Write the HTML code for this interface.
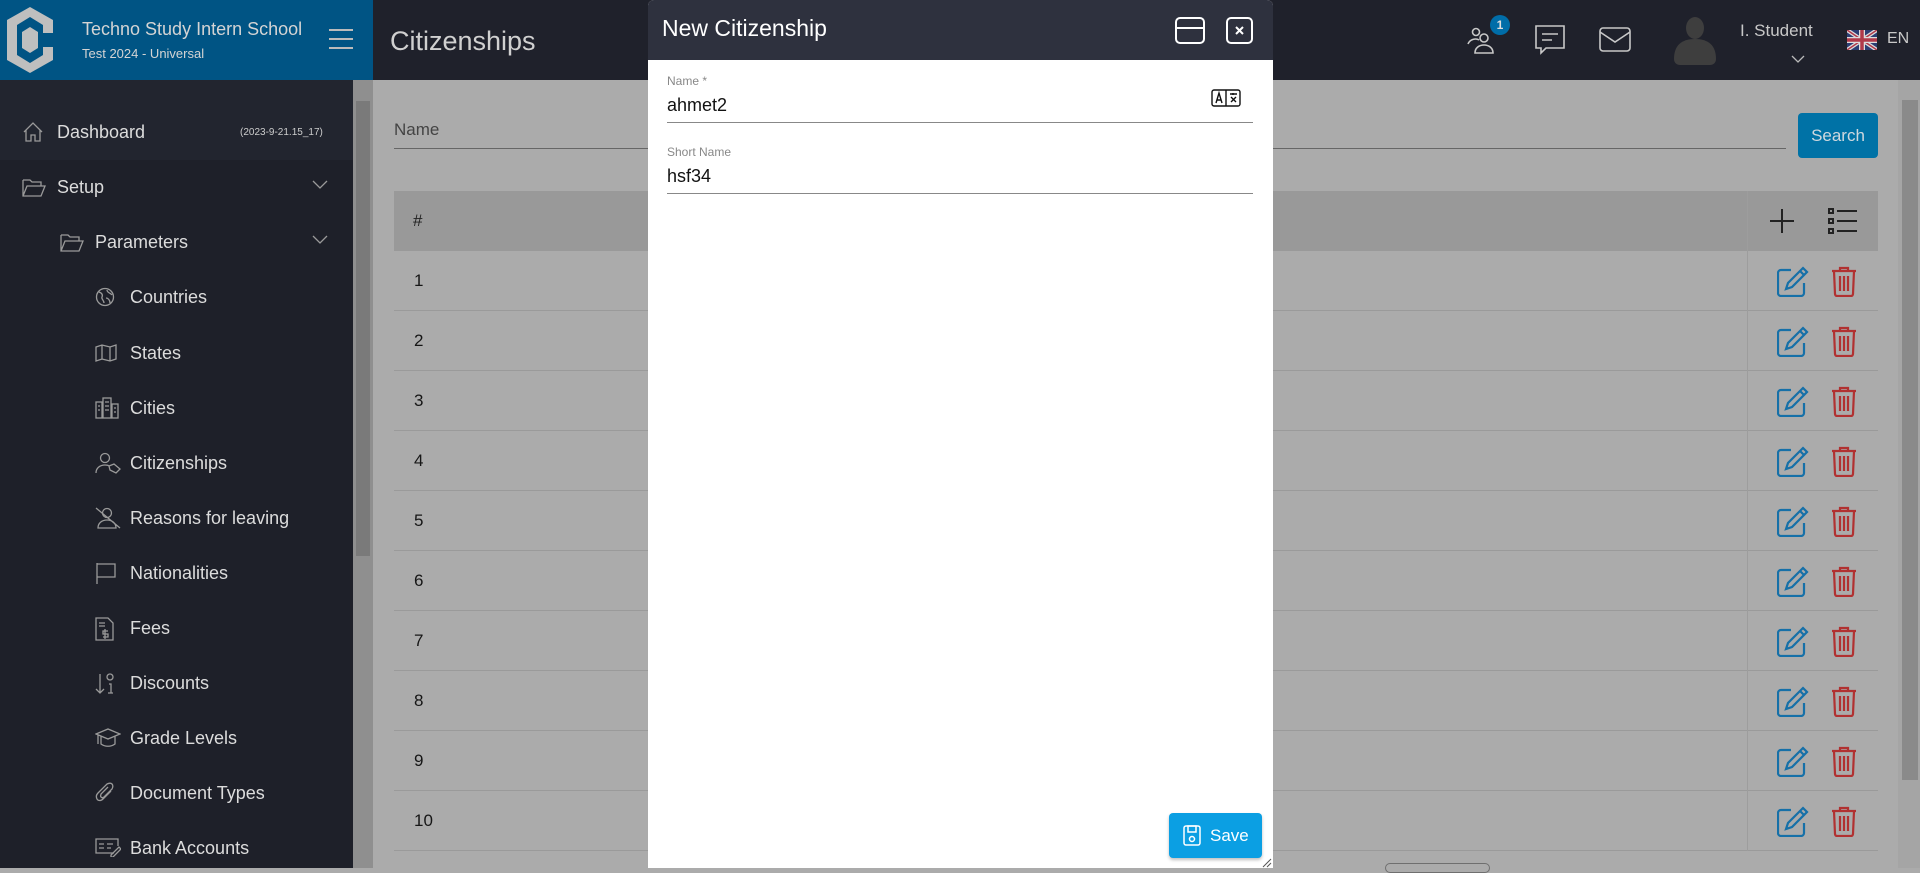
<!DOCTYPE html>
<html><head><meta charset="utf-8">
<style>
*{box-sizing:border-box;margin:0;padding:0}
body{width:1920px;height:868px;overflow:hidden;font-family:"Liberation Sans",sans-serif;background:#ababab;position:relative}
.abs{position:absolute}
#logo{left:0;top:0;width:373px;height:80px;background:#005484}
#hdr{left:373px;top:0;width:1547px;height:80px;background:#1f212b}
#side{left:0;top:80px;width:353px;height:788px;background:#1e2029}
#sscroll{left:353px;top:80px;width:20px;height:788px;background:#8f8f8f}
.si{position:absolute;color:#dcdcdc;font-size:18px;line-height:20px}
.ic{position:absolute;stroke:#9a9a9a;fill:none;stroke-width:1.3}
.row{position:absolute;left:394px;width:1484px;height:60px;border-bottom:1px solid #9a9a9a;background:#ababab}
.row span{position:absolute;left:20px;top:20px;font-size:17px;color:#161616}
.row .sep{position:absolute;left:1353px;top:0;width:1px;height:60px;background:#9d9d9d}
</style></head><body>
<div id="logo" class="abs">
<svg class="abs" style="left:5px;top:5px" width="50" height="70" viewBox="0 0 50 70"><polygon points="25,2 48,15 48,28 38,28 38,20 25,12 12,20 12,50 25,58 38,50 38,42 48,42 48,55 25,68 2,55 2,15" fill="#bfbfbf"/><polygon points="25,22 33,27 33,43 25,48 17,43 17,27" fill="#bfbfbf"/></svg>
<div class="abs" style="left:82px;top:19px;color:#d4d4d4;font-size:18px">Techno Study Intern School</div>
<div class="abs" style="left:82px;top:46px;color:#d4d4d4;font-size:13px">Test 2024 - Universal</div>
<div class="abs" style="left:329px;top:29px;width:24px;height:2px;background:#bbb"></div>
<div class="abs" style="left:329px;top:38px;width:24px;height:2px;background:#bbb"></div>
<div class="abs" style="left:329px;top:47px;width:24px;height:2px;background:#bbb"></div>
</div>
<div id="hdr" class="abs">
<div class="abs" style="left:17px;top:26px;color:#d0d0d0;font-size:27px">Citizenships</div>
<svg class="abs" style="left:1093px;top:22px" width="40" height="34" viewBox="0 0 40 34" fill="none" stroke="#c8c8c8" stroke-width="1.6"><circle cx="10" cy="10" r="3.5"/><circle cx="18" cy="16" r="4"/><path d="M2 22c2-5 8-6 11-4M9 31c0-5 4-8 9-8s9 3 9 8z"/></svg>
<div class="abs" style="left:1117px;top:15px;width:20px;height:20px;border-radius:50%;background:#006da8;color:#ddd;font-size:12px;text-align:center;line-height:20px;font-weight:bold">1</div>
<svg class="abs" style="left:1161px;top:24px" width="32" height="32" viewBox="0 0 32 32" fill="none" stroke="#c8c8c8" stroke-width="1.6"><path d="M2 2h28v22H12l-5 5v-5H2z"/><path d="M8 10h16M8 16h10"/></svg>
<svg class="abs" style="left:1226px;top:27px" width="32" height="25" viewBox="0 0 32 25" fill="none" stroke="#c8c8c8" stroke-width="1.6"><rect x="1" y="1" width="30" height="23" rx="3"/><path d="M1 5l15 10 15-10"/></svg>
<svg class="abs" style="left:1301px;top:15px" width="42" height="50" viewBox="0 0 42 50" fill="#3e3e3e"><ellipse cx="21" cy="13" rx="9" ry="11"/><path d="M0 44c0-14 8-20 21-20s21 6 21 20c0 4-3 6-6 6H6c-3 0-6-2-6-6z"/></svg>
<div class="abs" style="left:1367px;top:21px;color:#c8c8c8;font-size:17px">I. Student</div>
<svg class="abs" style="left:1418px;top:55px" width="14" height="8" viewBox="0 0 14 8" fill="none" stroke="#bbb" stroke-width="1.3"><path d="M1 1l6 6 6-6"/></svg>
<svg class="abs" style="left:1474px;top:30px" width="30" height="20" viewBox="0 0 60 40"><rect width="60" height="40" fill="#2b3d73"/><path d="M0 0L60 40M60 0L0 40" stroke="#ddd" stroke-width="8"/><path d="M0 0L60 40M60 0L0 40" stroke="#b0394a" stroke-width="3"/><path d="M30 0v40M0 20h60" stroke="#ddd" stroke-width="12"/><path d="M30 0v40M0 20h60" stroke="#b0394a" stroke-width="7"/></svg>
<div class="abs" style="left:1514px;top:30px;color:#c8c8c8;font-size:16px">EN</div>
</div>
<div class="abs" style="left:1898px;top:80px;width:22px;height:788px;background:#a5a5a5"></div>
<div class="abs" style="left:1902px;top:100px;width:16px;height:680px;background:#8a8a8a"></div>
<div id="side" class="abs">
<div class="abs" style="left:0;top:0;width:353px;height:80px;background:#22252f"></div>
</div>
<div id="sscroll" class="abs"><div class="abs" style="left:3px;top:21px;width:14px;height:455px;background:#7a7a7a"></div></div>
<svg class="ic" style="left:22px;top:121px" width="22" height="22" viewBox="0 0 22 22"><path d="M2 11L11 2l9 9M4 9v11h5v-6h4v6h5V9"/></svg>
<div class="si" style="left:57px;top:122px">Dashboard</div>
<div class="abs" style="left:240px;top:127px;color:#ccc;font-size:10px">(2023-9-21.15_17)</div>
<svg class="ic" style="left:22px;top:177px" width="24" height="20" viewBox="0 0 24 20"><path d="M1 3h7l2 2h9v4M1 3v16h18l4-10H5L1 19"/></svg>
<div class="si" style="left:57px;top:177px">Setup</div>
<svg class="ic" style="left:312px;top:180px" width="16" height="10" viewBox="0 0 16 10"><path d="M1 1l7 7 7-7"/></svg>
<svg class="ic" style="left:60px;top:232px" width="24" height="20" viewBox="0 0 24 20"><path d="M1 3h7l2 2h9v4M1 3v16h18l4-10H5L1 19"/></svg>
<div class="si" style="left:95px;top:232px">Parameters</div>
<svg class="ic" style="left:312px;top:235px" width="16" height="10" viewBox="0 0 16 10"><path d="M1 1l7 7 7-7"/></svg>
<svg class="ic" style="left:95px;top:287px" width="20" height="20" viewBox="0 0 20 20"><circle cx="10" cy="10" r="8.5"/><path d="M4 5c3 1 4 3 3 5s2 3 2 6M12 3c0 3 4 3 5 5M11 11c2 0 4 2 4 5"/></svg>
<div class="si" style="left:130px;top:287px">Countries</div>
<svg class="ic" style="left:95px;top:344px" width="22" height="18" viewBox="0 0 22 18"><path d="M1 3l6-2 8 2 6-2v14l-6 2-8-2-6 2zM7 1v14M15 3v14"/></svg>
<div class="si" style="left:130px;top:343px">States</div>
<svg class="ic" style="left:95px;top:397px" width="24" height="22" viewBox="0 0 24 22"><rect x="1" y="5" width="6" height="16"/><rect x="8" y="1" width="8" height="20"/><rect x="17" y="7" width="6" height="14"/><path d="M3 9h2M3 13h2M10 5h4M10 9h4M10 13h4M19 11h2M19 15h2"/></svg>
<div class="si" style="left:130px;top:398px">Cities</div>
<svg class="ic" style="left:95px;top:452px" width="26" height="22" viewBox="0 0 26 22"><circle cx="10" cy="6" r="4.5"/><path d="M1 21c0-5 4-8 9-8 2 0 3 0 4 1M14 14l5-2 6 5-4 4-6-3z"/></svg>
<div class="si" style="left:130px;top:453px">Citizenships</div>
<svg class="ic" style="left:95px;top:507px" width="26" height="22" viewBox="0 0 26 22"><circle cx="12" cy="6" r="4.5"/><path d="M3 21c0-5 4-8 9-8s9 3 9 8zM1 1l24 20"/></svg>
<div class="si" style="left:130px;top:508px">Reasons for leaving</div>
<svg class="ic" style="left:95px;top:562px" width="22" height="22" viewBox="0 0 22 22"><path d="M2 1v21M2 2h18v13H2"/></svg>
<div class="si" style="left:130px;top:563px">Nationalities</div>
<svg class="ic" style="left:95px;top:617px" width="20" height="24" viewBox="0 0 20 24"><path d="M1 1h12l5 5v17H1zM4 6h6M4 9h6M10 12v10M13 14H8v3h5v3H8"/></svg>
<div class="si" style="left:130px;top:618px">Fees</div>
<svg class="ic" style="left:95px;top:672px" width="20" height="24" viewBox="0 0 20 24"><path d="M5 2v19M1 17l4 4 4-4"/><circle cx="15" cy="5" r="3"/><path d="M14 12h2v9M13 21h5"/></svg>
<div class="si" style="left:130px;top:673px">Discounts</div>
<svg class="ic" style="left:95px;top:727px" width="26" height="22" viewBox="0 0 26 22"><path d="M1 7l12-5 12 5-12 5zM6 9v8c4 3 10 3 14 0V9M3 8v9"/></svg>
<div class="si" style="left:130px;top:728px">Grade Levels</div>
<svg class="ic" style="left:95px;top:782px" width="20" height="22" viewBox="0 0 20 22"><path d="M16 9l-8 8c-2 2-5 2-6 0s-1-4 1-6l9-9c2-1 4-1 5 0s1 3 0 5l-8 8c-1 1-2 1-3 0s0-2 0-3l7-7"/></svg>
<div class="si" style="left:130px;top:783px">Document Types</div>
<svg class="ic" style="left:95px;top:837px" width="26" height="20" viewBox="0 0 26 20"><path d="M19 16H1V2h22v7M4 7h5M4 11h5M12 7h6M12 11h4M16 18l8-8 2 2-8 8h-2z"/></svg>
<div class="si" style="left:130px;top:838px">Bank Accounts</div>

<!-- content -->
<div class="abs" style="left:394px;top:120px;color:#444;font-size:17px">Name</div>
<div class="abs" style="left:394px;top:148px;width:1392px;height:1px;background:#666"></div>
<div class="abs" style="left:1798px;top:113px;width:80px;height:45px;background:#0072a6;border-radius:4px;color:#cfd8de;font-size:17px;text-align:center;line-height:45px">Search</div>
<div class="abs" style="left:394px;top:191px;width:1484px;height:60px;background:#999"></div>
<div class="abs" style="left:1747px;top:191px;width:1px;height:660px;background:#9d9d9d"></div>
<div class="abs" style="left:413px;top:211px;color:#222;font-size:17px">#</div>
<svg class="abs" style="left:1769px;top:208px" width="26" height="26" viewBox="0 0 26 26" stroke="#222" stroke-width="2"><path d="M13 1v24M1 13h24"/></svg>
<svg class="abs" style="left:1828px;top:208px" width="30" height="26" viewBox="0 0 30 26" fill="none" stroke="#222" stroke-width="2"><rect x="1" y="1" width="4" height="4"/><rect x="1" y="11" width="4" height="4"/><rect x="1" y="21" width="4" height="4"/><path d="M9 3h20M9 13h20M9 23h20"/></svg>
<div id="rows"></div>
<script>
var h='';for(var i=0;i<10;i++){var t=251+i*60;h+='<div class="row" style="top:'+t+'px"><span>'+(i+1)+'</span><div class="sep"></div>'+
'<svg style="position:absolute;left:1383px;top:15px" width="32" height="31" viewBox="0 0 32 31" fill="none" stroke="#1670a8" stroke-width="2.2"><path d="M14 4H4a3 3 0 0 0-3 3v20a3 3 0 0 0 3 3h20a3 3 0 0 0 3-3V17"/><path d="M26 2l4 4-15 15-6 2 2-6z"/><path d="M23 5l4 4"/></svg>'+
'<svg style="position:absolute;left:1437px;top:15px" width="26" height="31" viewBox="0 0 26 31" fill="none" stroke="#b13131" stroke-width="2.2"><path d="M1 5h24M9 5V2h8v3M3 5l1 23a2 2 0 0 0 2 2h14a2 2 0 0 0 2-2l1-23M9 10v15M13 10v15M17 10v15"/></svg></div>';}
document.getElementById('rows').innerHTML=h;
</script>
<div class="abs" style="left:1385px;top:863px;width:105px;height:10px;border:1.5px solid #6f6f6f;border-radius:6px"></div>

<!-- modal -->
<div class="abs" style="left:648px;top:0;width:625px;height:868px;background:#fff;border-radius:6px 6px 0 0;overflow:hidden">
<div class="abs" style="left:0;top:0;width:625px;height:60px;background:#2e313e"></div>
<div class="abs" style="left:14px;top:15px;color:#fff;font-size:23px">New Citizenship</div>
<svg class="abs" style="left:527px;top:17px" width="30" height="27" viewBox="0 0 30 27" fill="none" stroke="#fff" stroke-width="2"><rect x="1" y="1" width="28" height="25" rx="4"/><path d="M1 11h28"/></svg>
<svg class="abs" style="left:578px;top:17px" width="27" height="27" viewBox="0 0 27 27" fill="none" stroke="#fff" stroke-width="2"><rect x="1" y="1" width="25" height="25" rx="4"/><path d="M10 10l7 7M17 10l-7 7"/></svg>
<div class="abs" style="left:19px;top:74px;color:#888;font-size:12px">Name *</div>
<div class="abs" style="left:19px;top:95px;color:#111;font-size:18px">ahmet2</div>
<svg class="abs" style="left:563px;top:89px" width="30" height="18" viewBox="0 0 30 18" fill="none" stroke="#111" stroke-width="1.4"><rect x="1" y="1" width="28" height="16" rx="2"/><path d="M15 1v16M5 14l3-10 3 10M6 11h4M19 5h7M22 4v2M20 8l5 5M25 8l-5 5"/></svg>
<div class="abs" style="left:19px;top:122px;width:586px;height:1px;background:#888"></div>
<div class="abs" style="left:19px;top:145px;color:#888;font-size:12px">Short Name</div>
<div class="abs" style="left:19px;top:166px;color:#111;font-size:18px">hsf34</div>
<div class="abs" style="left:19px;top:193px;width:586px;height:1px;background:#888"></div>
<div class="abs" style="left:521px;top:813px;width:93px;height:45px;background:#0b9fe3;border-radius:4px;box-shadow:0 2px 3px rgba(0,0,0,.25)"></div>
<svg class="abs" style="left:535px;top:825px" width="18" height="21" viewBox="0 0 18 21" fill="none" stroke="#fff" stroke-width="1.5"><rect x="1" y="1" width="16" height="19" rx="2"/><rect x="5" y="1" width="8" height="6"/><circle cx="9" cy="14" r="2.5"/></svg>
<div class="abs" style="left:562px;top:826px;color:#fff;font-size:17px">Save</div>
<svg class="abs" style="left:612px;top:856px" width="12" height="12" viewBox="0 0 12 12" stroke="#555" stroke-width="1"><path d="M11 3L3 11M11 7L7 11"/></svg>
</div>
</body></html>
